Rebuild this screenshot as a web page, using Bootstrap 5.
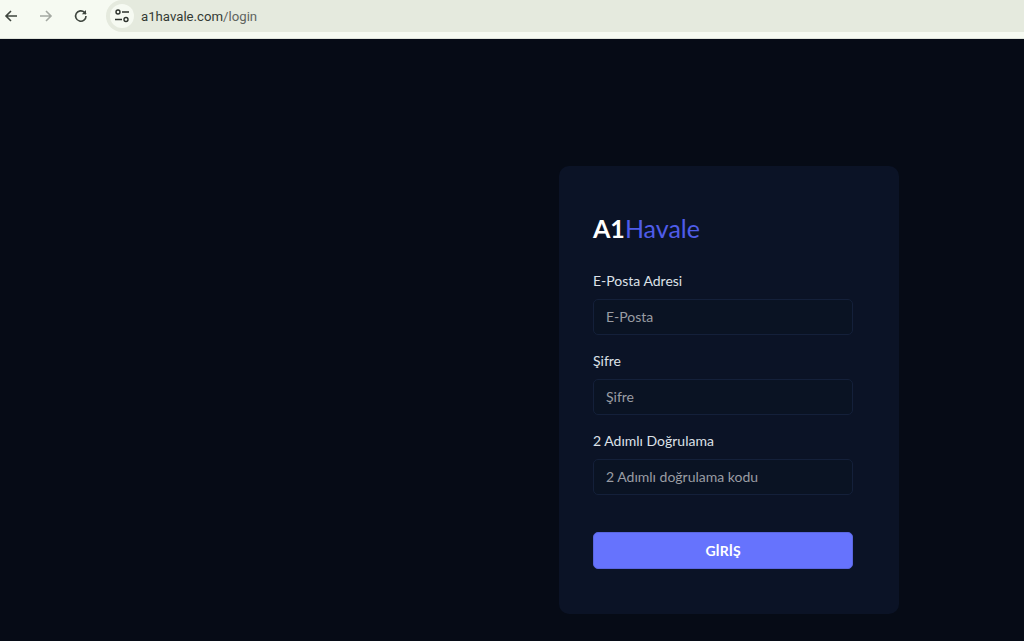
<!DOCTYPE html>
<html lang="tr">
<head>
<meta charset="utf-8">
<title>A1Havale</title>
<link href="https://cdn.jsdelivr.net/npm/bootstrap@5.3.0/dist/css/bootstrap.min.css" rel="stylesheet">
<style>
html,body{height:641px;overflow:hidden}
body{background:#060b16;font-family:Lato,"Noto Sans",sans-serif}
.chrome-bar{height:39px;background:#f6faf2;border-bottom:1px solid #dfe3db}
.chrome-bar .strip{height:32px;display:flex;align-items:center}
.tool-ico{width:18px;height:18px;flex:none;display:block}
.nav-cluster{height:32px;width:106px;flex:none;display:flex;align-items:center;gap:17px;padding-left:2px}
.url-pill{flex:1;height:32px;background:#e5eade;border-radius:16px 0 0 16px;display:flex;align-items:center;padding-left:4px}
.url-site{width:24px;height:24px;border-radius:50%;background:#f6faf2;flex:none;display:flex;align-items:center;justify-content:center}
.url-text{font-size:13.200px;line-height:32px;padding-top:2px;color:#5f645e;margin-left:7px;font-family:Roboto,sans-serif}
.url-text b{font-weight:400;color:#343a34}
.stage{height:602px;display:flex;justify-content:flex-end;padding:127px 125px 0 0}
.login-box{width:340px;height:448px;background:#0b1326;border-radius:10px;padding:45px 46px 0 34px}
.brand{font-size:25px;line-height:34px;margin-bottom:25.500px}
.brand b{color:#fff;font-weight:700}
.brand span{color:#4f5ce8}
.fld{margin-bottom:16px}
.fld label{display:block;color:#dde1e8;font-size:14px;line-height:20px;margin-bottom:8px}
.fld .form-control{height:36px;background:#0a1323;border:1px solid #14203a;border-radius:5px;color:#a0a3aa;font-size:14px;padding:0 12px;box-shadow:none}
.fld .form-control::placeholder{color:#9a9da3;opacity:1}
.enter-btn{display:block;width:100%;height:37px;margin-top:37.500px;background:#6673fd;border:1px solid #5a66df;border-radius:5px;color:#fff;font-weight:700;font-size:14px;padding:0}
.enter-btn:hover{background:#6673fd;color:#fff}
</style>
</head>
<body>
<div class="chrome-bar">
  <div class="strip">
    <div class="nav-cluster">
      <svg class="tool-ico" viewBox="0 0 18 18" fill="none" stroke="#3e453e" stroke-width="1.6"><path d="M15 9H4M9 4 4 9l5 5"/></svg>
      <svg class="tool-ico" viewBox="0 0 18 18" fill="none" stroke="#a4a9a2" stroke-width="1.6"><path d="M3 9h11M9 4l5 5-5 5"/></svg>
      <svg class="tool-ico" viewBox="0 0 18 18" fill="none" stroke="#3e453e" stroke-width="1.6"><path d="M14 9a5.2 5.2 0 1 1-1.5-3.6L14 7"/><path d="M14 3v4.2H9.8" fill="#3e453e" stroke="none"/></svg>
    </div>
    <div class="url-pill">
      <div class="url-site">
        <svg width="16" height="16" viewBox="0 0 16 16" fill="none" stroke="#2d322d" stroke-width="1.4"><circle cx="4" cy="4" r="2"/><path d="M8 4h7M1 11.500h7"/><circle cx="12" cy="11.500" r="2"/></svg>
      </div>
      <div class="url-text"><b>a1havale.com</b>/login</div>
    </div>
  </div>
</div>
<main class="stage">
  <div class="login-box">
    <div class="brand"><b>A1</b><span>Havale</span></div>
    <form>
      <div class="fld"><label for="m">E-Posta Adresi</label><input id="m" class="form-control" placeholder="E-Posta"></div>
      <div class="fld"><label for="s">Şifre</label><input id="s" class="form-control" placeholder="Şifre"></div>
      <div class="fld"><label for="k">2 Adımlı Doğrulama</label><input id="k" class="form-control" placeholder="2 Adımlı doğrulama kodu"></div>
      <button type="button" class="btn enter-btn">GİRİŞ</button>
    </form>
  </div>
</main>
<script src="https://cdn.jsdelivr.net/npm/bootstrap@5.3.0/dist/js/bootstrap.bundle.min.js"></script>
</body>
</html>
